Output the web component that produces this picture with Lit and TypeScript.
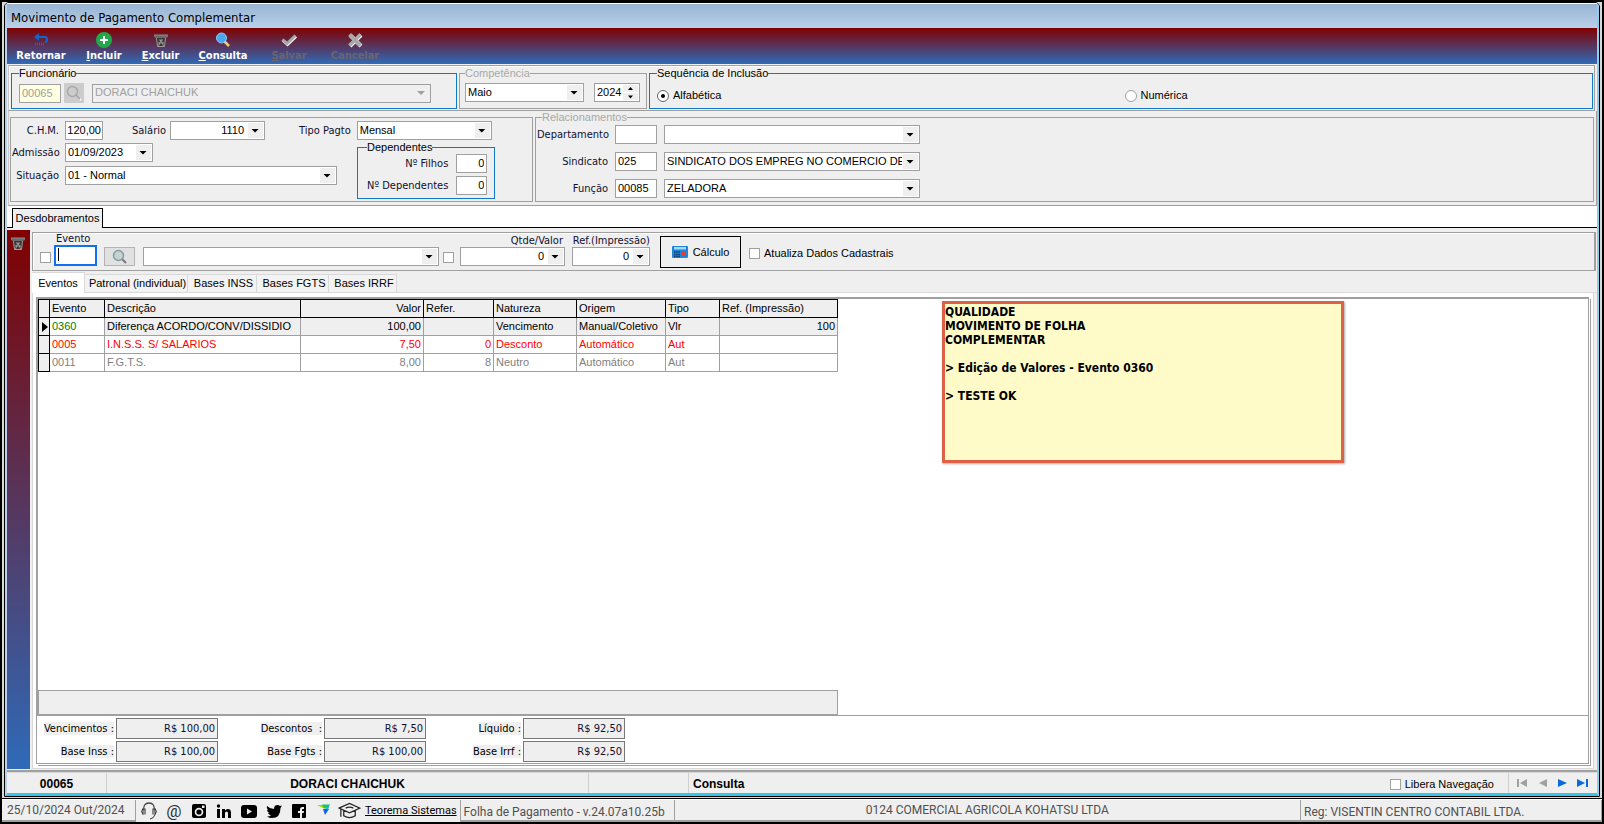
import { LitElement, html, css, svg, nothing } from "lit";
import { customElement } from "lit/decorators.js";

const icons: Record<string, unknown> = {
  back: svg`<path d="M5 5h7q2 0 2 2.500T12 10" fill="none" stroke="#1565c8" stroke-width="2"/><path d="M6 1v8L1 5z" fill="#1565c8"/><path d="M2 12h10" stroke="#1565c8" stroke-width="3" stroke-dasharray="1 1"/>`,
  add: svg`<circle cx="8" cy="8" r="8" fill="#22a84a"/><path d="M8 4v8M4 8h8" stroke="#fff" stroke-width="2"/>`,
  trash: svg`<path d="M1 3h14v2l-2 1H3L1 5z" fill="#6c6c6c"/><path d="M1 3h14" stroke="#8c8c8c"/><path d="M3 6h10l-1 9H4z" fill="#3c3434"/><path d="M3.500 6l1 8.500h7l1-8.500M5.500 14l2.500-6 2.500 6M6 8h4M5 11h6" fill="none" stroke="#a09c9c"/>`,
  find: svg`<path d="M9.500 9.500L14 14" stroke="#e8d06a" stroke-width="2.500"/><circle cx="6.500" cy="6" r="5" fill="#4aa8f0" stroke="#8cc8f8"/><path d="M9.500 9.500l2 2" stroke="#ccc" stroke-width="2"/>`,
  check: svg`<path d="M2 8.500l4.500 4L15 4.500" fill="none" stroke="#fff" stroke-width="3"/><path d="M1.500 7.500l4.500 4L14.500 3.500" fill="none" stroke="#a8a8a8" stroke-width="3"/>`,
  cross: svg`<path d="M3 3l11 11M14 3L3 14" stroke="#fff" stroke-width="4"/><path d="M2.500 2.500l11 11M13.500 2.500l-11 11" stroke="#a8a8a8" stroke-width="3.500"/>`,
  lens: svg`<path d="M9.500 9.500L14 14" stroke="#777" stroke-width="2"/><circle cx="6.500" cy="6.500" r="5" fill="#c4d4d4" stroke="#8a9a9a" stroke-width="1.500"/>`,
  lensOff: svg`<path d="M10 10l5 5" stroke="#fff" stroke-width="2"/><path d="M9.500 9.500L14 14" stroke="#a8a8a8" stroke-width="2"/><circle cx="6.500" cy="6.500" r="5" fill="none" stroke="#a8a8a8" stroke-width="1.500"/>`,
  calc: svg`<rect y="2" width="16" height="12" rx="1" fill="#1c86dc"/><rect x="2" y="3" width="12" height="2.500" fill="#a8d8f0"/><path d="M2 8h6M2 10.500h6M2 12.500h6" stroke="#123a66" stroke-width="1.500" stroke-dasharray="1.500 .7"/><path d="M9 8h5M9 10.500h5" stroke="#e03c30" stroke-width="1.800" stroke-dasharray="2 .6"/>`,
  headset: svg`<path d="M4 8C3 4 5 1 9 1s6 3 5 7" fill="none" stroke="#444" stroke-width="1.300"/><path d="M3 6.500v6M5 6.500v6M13 6.500v6M15 6.500v6" stroke="#222"/><path d="M3 6.500q-3 3 0 6M15 6.500q3 3 0 6q-1 4-5 4.500" fill="none" stroke="#333"/>`,
  insta: svg`<rect x="2" y="2" width="14" height="14" rx="2" fill="#000"/><circle cx="9" cy="10" r="4.300" fill="#efefef"/><circle cx="9" cy="10" r="2.600" fill="#000"/><path d="M12 3.500h2.500V6H12z" fill="#efefef"/>`,
  linkedin: svg`<path d="M2 7h3v9H2zM7 7h3v1.500Q11 7 13 7q3 0 3 4v5h-3v-5q0-1.500-1.500-1.500T10 11v5H7z"/><circle cx="3.500" cy="4" r="1.700"/>`,
  youtube: svg`<rect x="1" y="3" width="16" height="13" rx="3"/><path d="M7 6.500l5 3-5 3z" fill="#efefef"/>`,
  twitter: svg`<path d="M2 4q3 3 7 3 0-4 3.500-4 1.500 0 2.500 1l2-.5-1.500 2.500Q15.500 16 7 16q-3 0-5-1.500 3 0 4-1.500-2.500 0-3-2h1.500Q2 10 2 7.500l1.200.4Q1 6 2 4z"/>`,
  facebook: svg`<rect x="2" y="2" width="14" height="14" rx="1"/><path d="M10 16v-5H8V9h2V7.500Q10 5 12.500 5H14v2h-1q-1 0-1 1v1h2l-.4 2H12v5z" fill="#efefef"/>`,
  bird: svg`<path d="M2 3h7l1 4z" fill="#8ee000"/><path d="M7 2.500h8l-2 4-4-.5z" fill="#18c070"/><path d="M8 7l6 0-4 6z" fill="#1560e8"/><path d="M9 5.500l5-1-1 3.500z" fill="#19b8e8"/>`,
};
const icon = (name: string, size = 16, box = 16) =>
  html`<svg width=${size} height=${size} viewBox="0 0 ${box} ${box}" aria-hidden="true">${icons[name]}</svg>`;

const tools = [
  ["back", "", "Retornar", false], ["add", "I", "ncluir", false], ["trash", "E", "xcluir", false],
  ["find", "C", "onsulta", false], ["check", "S", "alvar", true], ["cross", "", "Cancelar", true],
] as const;

const rows = [
  { cls: "current", cells: ["0360", "Diferença ACORDO/CONV/DISSIDIO", "100,00", "", "Vencimento", "Manual/Coletivo", "Vlr", "100"] },
  { cls: "debit", cells: ["0005", "I.N.S.S. S/ SALARIOS", "7,50", "0", "Desconto", "Automático", "Aut", ""] },
  { cls: "neutral", cells: ["0011", "F.G.T.S.", "8,00", "8", "Neutro", "Automático", "Aut", ""] },
];
const heads = ["Evento", "Descrição", "Valor", "Refer.", "Natureza", "Origem", "Tipo", "Ref. (Impressão)"];
const totals = [
  ["Vencimentos :", "R$ 100,00"], ["Descontos  :", "R$ 7,50"], ["Líquido :", "R$ 92,50"],
  ["Base Inss :", "R$ 100,00"], ["Base Fgts :", "R$ 100,00"], ["Base Irrf :", "R$ 92,50"],
];
const social = [
  ["headset", "Suporte"], ["at", "E-mail"], ["insta", "Instagram"], ["linkedin", "LinkedIn"],
  ["youtube", "YouTube"], ["twitter", "Twitter"], ["facebook", "Facebook"], ["bird", "Portal"],
];

@customElement("app-root")
export class AppRoot extends LitElement {
  static styles = css`
    :host { display: block; font: 11px/13px "Liberation Sans", sans-serif; color: #000; --line: #a0a0a0; --face: #efefef; --blue: #0f78c8; }
    * { box-sizing: border-box; }
    button, input, select { font: inherit; color: inherit; margin: 0; border-radius: 0; }
    input:not([type]), select { appearance: none; width: 100%; height: 19px; padding: 0 2px 1px; border: 1px solid var(--line); background: #fff; outline: 0; min-width: 0; }
    input[type="checkbox"], input[type="radio"] { appearance: none; width: 11px; height: 11px; border: 1px solid var(--line); background: #fff; flex: none; }
    input[type="radio"] { width: 12px; height: 12px; border-radius: 50%; display: grid; place-items: center; }
    input[type="radio"]:checked { border-color: #666; }
    input[type="radio"]:checked::before { content: ""; width: 4px; height: 4px; border-radius: 50%; background: #000; }
    svg { display: block; flex: none; }
    label { white-space: nowrap; }
    .screen { min-height: 100vh; background: #000; padding: 2px; display: flex; flex-direction: column; }
    .desk { flex: 1; display: flex; flex-direction: column; background: #d8d8d8; padding: 0 2px 1px; }
    .window { flex: 1; display: flex; flex-direction: column; border: 1px solid #000; border-radius: 5px 5px 0 0; background: var(--face); }
    .frame { flex: 1; display: flex; flex-direction: column; border: 2px solid #b9d1ea; border-top: 1px solid #fff; border-right-color: #8fcdee; border-bottom-color: #30c8e8; border-radius: 4px 4px 0 0; }
    .title { height: 24px; margin: 0; padding: 2px 4px 0; font: 13px/24px "DejaVu Sans Condensed", "DejaVu Sans", sans-serif; background: linear-gradient(#98b4d2, #b9d1ea); }
    .tahoma { font-family: "DejaVu Sans Condensed", "DejaVu Sans", sans-serif; color: #101030; }
    .tools { height: 36px; padding: 3px 2px 0; display: grid; grid-template-columns: 64px 62px 51px 74px 58px 74px; background: linear-gradient(#800000, #2f6ab8); }
    .tools button { border: 0; background: none; padding: 1px 0 0; display: flex; flex-direction: column; align-items: center; gap: 1px; color: #fff; font: bold 11px/14px "DejaVu Sans Condensed", "DejaVu Sans", sans-serif; }
    .tools button:disabled { color: #6b6470; }
    .band { display: flex; gap: 2px; border: 1px solid var(--line); border-left-color: #c8c8c8; margin: 1px 2px 0 1px; padding: 1px 1px 1px 2px; box-shadow: inset 1px 1px #fff; }
    fieldset { margin: 0; padding: 3px 7px 5px; border: 1px solid var(--line); min-width: 0; }
    fieldset.hot { border-color: var(--blue); }
    legend { padding: 0; height: 13px; }
    legend.off { color: #a8a8a8; }
    .row { display: flex; align-items: center; }
    .combo { display: grid; position: relative; }
    .combo > input, .combo > select { grid-area: 1 / 1; padding-right: 17px; }
    .combo > .num { padding-right: 20px; }
    .combo::before { content: ""; grid-area: 1 / 1; justify-self: end; z-index: 1; width: 15px; margin: 2px; background: var(--face); pointer-events: none; }
    .combo::after { content: ""; grid-area: 1 / 1; place-self: center end; z-index: 2; width: 8px; height: 4px; margin-right: 6px; background: #000; clip-path: polygon(0 0, 100% 0, 50% 100%); pointer-events: none; }
    .combo.off::after { background: var(--line); }
    .num { text-align: right; }
    .code { width: 42px; flex: none; }
    .employee { width: 446px; flex: none; }
    .employee .code input { background: #ffffe1; color: #a0a0a0; }
    .employee .combo { flex: 1; margin: 0 18px 0 8px; }
    .employee select { background: var(--face); color: #a0a0a0; opacity: 1; }
    .sq { width: 20px; height: 20px; margin-left: 3px; padding: 2px; border: 0; background: #ccc; }
    .period { width: 188px; flex: none; padding-left: 5px; padding-right: 6px; }
    .period .combo { width: 119px; }
    .spin { width: 46px; margin-left: 10px; display: grid; }
    .spin > * { grid-area: 1 / 1; }
    .spin svg { justify-self: end; align-self: center; margin-right: 2px; background: var(--face); }
    .order { flex: 1; padding-right: 0; }
    .radios { display: grid; grid-template-columns: 1fr 1fr; padding-top: 6px; }
    .check { display: flex; align-items: center; gap: 4px; }
    .data { display: flex; gap: 2px; padding: 0 2px 3px 1px; border: 1px solid var(--line); border-top: 0; margin: 0 0 0 1px; border-left-color: #c8c8c8; }
    .person { width: 523px; flex: none; margin-top: 6px; padding: 3px 0 0 1px; border: 1px solid var(--line); }
    .person .key { width: 47px; text-align: right; margin-right: 6px; flex: none; }
    .w38 { width: 38px; } .w95 { width: 95px; } .w135 { width: 135px; } .w88 { width: 88px; } .w272 { width: 272px; }
    .w38 input:not([type]) { padding: 0 1px 1px; }
    .gapA { margin: 0 4px 0 29px; } .gapB { margin: 0 6px 0 34px; }
    .lower { display: flex; gap: 19px; align-items: flex-start; }
    .stack { display: grid; gap: 4px; padding-top: 3px; align-content: start; width: 326px; }
    .deps { width: 138px; padding: 0 9px 3px; display: grid; gap: 3px; margin-top: 1px; }
    .deps .row { justify-content: flex-end; gap: 8px; }
    .deps input:not([type]) { width: 31px; }
    .rel { flex: 1; padding: 1px 4px 3px 1px; display: grid; gap: 8px 7px; justify-content: start; align-content: start; grid-template-columns: 71px 42px 256px; align-items: center; }
    .rel legend { margin-left: 5px; }
    .rel label { text-align: right; }
    .strip { height: 22px; background: #fff; border-bottom: 1px solid #000; padding-left: 5px; display: flex; align-items: flex-end; }
    .strip button { height: 20px; width: 91px; padding: 0; border: 1px solid #000; border-bottom: 0; background: var(--face); margin-bottom: -1px; }
    .main { flex: 1; display: flex; gap: 2px; padding-top: 2px; }
    .side { width: 23px; background: linear-gradient(#800000, #2f6ab8); padding: 5px 0 0 3px; }
    .side button { border: 0; background: none; padding: 0; }
    .work { flex: 1; min-width: 0; display: flex; flex-direction: column; padding-top: 2px; }
    .filter { height: 39px; margin-right: 1px; border: 1px solid var(--line); border-right-width: 2px; display: flex; align-items: flex-end; padding: 0 0 4px 7px; box-shadow: inset 1px 1px #fff; }
    .filter > .pick { margin-bottom: 3px; }
    .event { width: 43px; margin: 0 7px 0 3px; display: grid; position: relative; }
    .event label { padding-left: 2px; }
    .event input:not([type]) { height: 21px; border: 2px solid #1070f0; }
    .event::after { content: ""; position: absolute; left: 4px; bottom: 5px; width: 1px; height: 13px; background: #000; }
    .lens { width: 31px; height: 19px; padding: 0; border: 1px solid #b4b4b4; background: #e1e1e1; display: grid; place-items: center; margin-right: 8px; }
    .wide { width: 296px; margin-right: 4px; }
    .qty { width: 105px; margin: 0 7px 0 6px; } .ref { width: 78px; margin-right: 10px; }
    .qty label, .ref label { display: block; text-align: right; padding-right: 2px; }
    .ref label { padding: 0; }
    .calc { width: 81px; height: 32px; margin: 0 8px -2px 0; border: 1px solid #000; background: var(--face); display: flex; align-items: center; justify-content: center; gap: 5px; padding: 0; }
    .filter > .update { margin-bottom: 6px; }
    .tabs { height: 22px; display: flex; align-items: flex-end; border-bottom: 1px solid #d9d9d9; }
    .tabs button { height: 18px; padding: 0 0 0 3px; border: 1px solid #d9d9d9; border-left: 0; border-bottom: 0; background: #f3f3f3; white-space: nowrap; }
    .tabs button:first-child { height: 21px; width: 53px; padding: 0; background: #fff; margin-bottom: -1px; }
    .tabs .t1 { width: 103px; } .tabs .t2 { width: 69px; } .tabs .t3 { width: 72px; } .tabs .t4 { width: 68px; }
    .page { flex: 1; display: flex; flex-direction: column; background: #fff; border: 1px solid #d9d9d9; border-top: 0; margin-right: 3px; padding: 4px 2px 2px 3px; }
    .sheet { flex: 1; display: flex; flex-direction: column; border: 1px solid var(--line); box-shadow: 1px 1px #fff, 2px 2px var(--line); margin: 0 2px 2px 0; }
    .grid { flex: 1; display: flex; flex-direction: column; justify-content: space-between; border: 1px solid var(--line); border-right: 0; }
    .top { display: flex; align-items: flex-start; gap: 104px; }
    table { border-collapse: collapse; table-layout: fixed; width: 799px; }
    th, td { height: 18px; padding: 0 2px; border: 1px solid var(--line); font-weight: normal; text-align: left; white-space: nowrap; overflow: hidden; }
    th { background: var(--face); border-color: #000; }
    th.mark { border: 1px solid #000; padding: 0 0 0 3px; }
    .r { text-align: right; }
    .current td { background: var(--face); } .current td.code0 { background: #fff; color: #008000; }
    .debit td { color: #f00; } .neutral td { color: #808080; }
    .note { width: 402px; height: 162px; margin: 2px 0; padding: 1px 0; border: 3px solid #dd6144; background: #fffbc8; box-shadow: 1px 1px 2px #0005; font: bold 12px/14px "DejaVu Sans Condensed", "DejaVu Sans", sans-serif; white-space: pre-line; }
    .foot { width: 800px; height: 25px; background: var(--face); border: 1px solid var(--line); }
    .totals { display: grid; grid-template-columns: 77px 102px 102px 102px 93px 102px; gap: 2px; padding: 2px 0 1px; align-items: center; }
    .totals label { justify-self: end; background: var(--face); white-space: pre; color: #000; }
    .totals input:not([type]) { height: 21px; background: var(--face); border-color: #777; }
    .status { height: 22px; border-top: 1px solid #d9d9d9; border-bottom: 1px solid var(--line); box-shadow: 0 -2px var(--line); margin-top: 3px; display: flex; align-items: stretch; font-size: 12px; font-weight: bold; }
    .status > div { display: flex; align-items: center; justify-content: center; border-right: 1px solid #d0d0d0; padding-top: 3px; }
    .c100 { width: 100px; } .c480 { width: 482px; }
    .status > .mode { flex: 1; justify-content: flex-start; padding-left: 4px; border: 0; }
    .status > .free { font-size: 11px; font-weight: normal; padding-right: 14px; }
    .status > .nav { gap: 6px; padding: 0 3px; width: 88px; border-right: 0; }
    .nav button { border: 0; background: none; padding: 0; }
    .bar { height: 23px; background: var(--face); display: flex; font: 12px/18px Roboto, sans-serif; color: #505050; margin: 1px 0 0; border-top: 1px solid #fff; }
    .bar > div { border-right: 1px solid var(--line); border-bottom: 2px solid var(--line); padding: 1px 4px 0; white-space: nowrap; }
    .bar > .social { display: flex; gap: 7px; align-items: center; padding: 0 3px 0 4px; border-bottom: 0; }
    .social a { color: #000; display: block; line-height: 16px; }
    .social .at { font-size: 17px; width: 18px; text-align: center; color: #333; text-decoration: none; }
    .social .school { display: flex; align-items: center; gap: 4px; font-size: 11px; margin-left: -2px; }
    .bar > .app { width: 214px; padding: 3px 3px 0; } .bar > .company { flex: 1; text-align: center; } .bar > .owner { width: 301px; padding: 3px 3px 0; }
    .bar > .date { width: 134px; padding-left: 5px; }
  `;

  private combo(id: string, value: string, cls = "", label = "", off = false) {
    return html`<div class="combo ${cls} ${off ? "off" : ""}"><select id=${id} aria-label=${label || nothing} ?disabled=${off}><option>${value}</option></select></div>`;
  }

  render() {
    return html`<div class="screen">
      <div class="desk"><div class="window"><div class="frame">
        <h1 class="title">Movimento de Pagamento Complementar</h1>
        <nav class="tools">${tools.map(([i, key, rest, off]) => html`<button ?disabled=${off}>${icon(i)}<span>${key ? html`<u>${key}</u>` : nothing}${rest}</span></button>`)}</nav>

        <div class="band">
          <fieldset class="employee hot"><legend>Funcionário</legend>
            <div class="row"><div class="code"><input aria-label="Código" value="00065" disabled></div>
              <button class="sq" aria-label="Pesquisar" disabled>${icon("lensOff")}</button>
              ${this.combo("func", "DORACI CHAICHUK", "", "Nome", true)}</div>
          </fieldset>
          <fieldset class="period"><legend class="off">Competência</legend>
            <div class="row">${this.combo("mes", "Maio", "", "Mês")}
              <div class="spin"><input aria-label="Ano" value="2024"><svg width="15" height="15" viewBox="0 0 15 15"><path d="M5 5L7.500 2 10 5zM5 10.500L7.500 13.500 10 10.500z"/><path d="M0 7.500h15" stroke="#fff"/></svg></div></div>
          </fieldset>
          <fieldset class="order hot"><legend>Sequência de Inclusão</legend>
            <div class="radios"><label class="check"><input type="radio" name="o" checked>Alfabética</label><label class="check"><input type="radio" name="o">Numérica</label></div>
          </fieldset>
        </div>

        <div class="data">
          <div class="person">
            <div class="row"><label class="key tahoma" for="chm">C.H.M.</label><div class="w38"><input id="chm" class="num" value="120,00"></div>
              <label class="tahoma gapA" for="sal">Salário</label><div class="combo w95"><input id="sal" class="num" value="1110"></div>
              <label class="tahoma gapB" for="tipo">Tipo Pagto</label>${this.combo("tipo", "Mensal", "w135")}</div>
            <div class="lower">
              <div class="stack">
                <div class="row"><label class="key tahoma" for="adm">Admissão</label><div class="combo w88"><input id="adm" value="01/09/2023"></div></div>
                <div class="row"><label class="key tahoma" for="sit">Situação</label>${this.combo("sit", "01 - Normal", "w272")}</div>
              </div>
              <fieldset class="deps hot"><legend>Dependentes</legend>
                <div class="row"><label class="tahoma" for="fil">Nº Filhos</label><input id="fil" class="num" value="0"></div>
                <div class="row"><label class="tahoma" for="dep">Nº Dependentes</label><input id="dep" class="num" value="0"></div>
              </fieldset>
            </div>
          </div>
          <fieldset class="rel"><legend class="off">Relacionamentos</legend>
            <label class="tahoma" for="dp">Departamento</label><input id="dp">${this.combo("dpn", "", "", "Nome do departamento")}
            <label class="tahoma" for="sd">Sindicato</label><input id="sd" value="025">${this.combo("sdn", "SINDICATO DOS EMPREG NO COMERCIO DE F", "", "Nome do sindicato")}
            <label class="tahoma" for="fn">Função</label><input id="fn" value="00085">${this.combo("fnn", "ZELADORA", "", "Nome da função")}
          </fieldset>
        </div>

        <div class="strip"><button>Desdobramentos</button></div>
        <div class="main">
          <div class="side"><button aria-label="Excluir evento">${icon("trash")}</button></div>
          <div class="work">
            <div class="filter">
              <input class="pick" type="checkbox" aria-label="Fixar evento">
              <div class="event"><label class="tahoma" for="ev">Evento</label><input id="ev"></div>
              <button class="lens" aria-label="Pesquisar evento">${icon("lens")}</button>
              ${this.combo("evn", "", "wide", "Descrição do evento")}
              <input class="pick" type="checkbox" aria-label="Fixar valor">
              <div class="qty"><label class="tahoma" for="qv">Qtde/Valor</label><div class="combo"><input id="qv" class="num" value="0"></div></div>
              <div class="ref"><label class="tahoma" for="ri">Ref.(Impressão)</label><div class="combo"><input id="ri" class="num" value="0"></div></div>
              <button class="calc">${icon("calc")}Cálculo</button>
              <label class="check update"><input type="checkbox">Atualiza Dados Cadastrais</label>
            </div>
            <div class="tabs"><button>Eventos</button><button class="t1">Patronal (individual)</button><button class="t2">Bases INSS</button><button class="t3">Bases FGTS</button><button class="t4">Bases IRRF</button></div>
            <div class="page"><div class="sheet">
              <div class="grid">
                <div class="top">
                  <table>
                    <colgroup>${[11, 55, 196, 123, 70, 83, 89, 54, 118].map(w => html`<col style="width:${w}px">`)}</colgroup>
                    <thead><tr><th class="mark"></th>${heads.map((h, i) => html`<th class=${i === 2 ? "r" : ""}>${h}</th>`)}</tr></thead>
                    <tbody>${rows.map((r, n) => html`<tr class=${r.cls}><th class="mark">${n === 0 ? html`<svg width="6" height="10" viewBox="0 0 6 10"><path d="M0 0l6 5-6 5z"/></svg>` : nothing}</th>${r.cells.map((c, i) => html`<td class=${i === 0 ? "code0" : i === 2 || i === 3 || i === 7 ? "r" : ""}>${c}</td>`)}</tr>`)}</tbody>
                  </table>
                  <div class="note">${"QUALIDADE\nMOVIMENTO DE FOLHA\nCOMPLEMENTAR\n\n> Edição de Valores - Evento 0360\n\n> TESTE OK"}</div>
                </div>
                <div class="foot"></div>
              </div>
              <div class="totals tahoma">${totals.map(([l, v], i) => html`<label for="t${i}">${l}</label><input id="t${i}" class="num" readonly value=${v}>`)}</div>
            </div></div>
          </div>
        </div>

        <div class="status">
          <div class="c100">00065</div><div class="c480">DORACI CHAICHUK</div><div class="c100"></div><div class="mode">Consulta</div>
          <div class="free"><label class="check"><input type="checkbox">Libera Navegação</label></div>
          <div class="nav">${[["Primeiro", "M2 2v8", "M11 2v8L4 6z", "#a0a0a0"], ["Anterior", "", "M11 2v8L3 6z", "#a0a0a0"], ["Próximo", "", "M2 2v8l9-4z", "#0a6ad8"], ["Último", "M11 2v8", "M1 2v8l8-4z", "#0a6ad8"]].map(([n, a, b, c]) => html`<button aria-label=${n}><svg width="14" height="12" viewBox="0 0 14 12"><path d=${a} stroke=${c} stroke-width="2"/><path d=${b} fill=${c}/></svg></button>`)}</div>
        </div>
      </div></div></div>

      <footer class="bar">
        <div class="date">25/10/2024 Out/2024</div>
        <div class="social">${social.map(([i, n]) => i === "at" ? html`<a href="#" class="at" aria-label=${n}>@</a>` : html`<a href="#" aria-label=${n}>${icon(i, 18, 18)}</a>`)}
          <div class="school"><svg width="23" height="18" viewBox="0 0 24 18" fill="none" stroke="#222" stroke-width="1.300"><path d="M1 6L12 1l11 5-11 5zM6 8.500V14q6 4 12 0V8.500M3 7v8M8 6q4-2 8 0"/></svg>
          <a href="#">Teorema Sistemas</a></div></div>
        <div class="app">Folha de Pagamento - v.24.07a10.25b</div>
        <div class="company">0124 COMERCIAL AGRICOLA KOHATSU LTDA</div>
        <div class="owner">Reg: VISENTIN CENTRO CONTABIL LTDA.</div>
      </footer>
    </div>`;
  }
}
